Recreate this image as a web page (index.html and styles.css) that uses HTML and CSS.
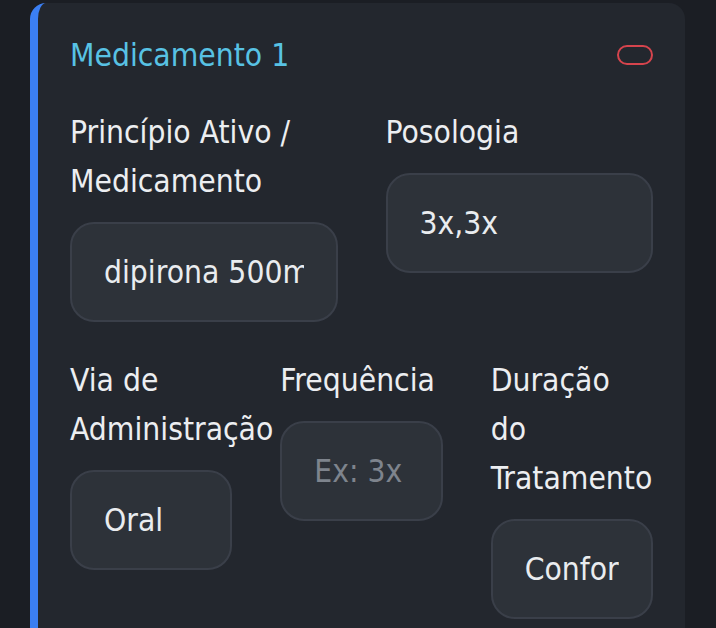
FILE: index.html
```html
<!DOCTYPE html>
<html lang="pt-BR">
<head>
<meta charset="utf-8">
<title>Medicamento</title>
<link rel="stylesheet" href="styles.css">
</head>
<body>
<div class="page">
  <section class="card">
    <header class="card-header">
      <h2 class="card-title">Medicamento 1</h2>
      <button class="remove-btn" type="button" aria-label="Remover medicamento"></button>
    </header>
    <div class="row row-two">
      <div class="field">
        <label class="field-label" for="f1">Princípio Ativo / Medicamento</label>
        <input class="field-input" id="f1" type="text" value="dipirona 500mg">
      </div>
      <div class="field">
        <label class="field-label" for="f2">Posologia</label>
        <input class="field-input" id="f2" type="text" value="3x,3x">
      </div>
    </div>
    <div class="row row-three">
      <div class="field">
        <label class="field-label" for="f3">Via de Administração</label>
        <input class="field-input" id="f3" type="text" value="Oral">
      </div>
      <div class="field">
        <label class="field-label" for="f4">Frequência</label>
        <input class="field-input" id="f4" type="text" placeholder="Ex: 3x">
      </div>
      <div class="field">
        <label class="field-label" for="f5">Duração do Tratamento</label>
        <input class="field-input" id="f5" type="text" value="Conforme orientação médica">
      </div>
    </div>
  </section>
</div>
</body>
</html>
```

FILE: styles.css
```css
html, body {
  margin: 0;
  padding: 0;
}

body {
  background: #1b1e24;
  font-family: "DejaVu Sans Condensed", "DejaVu Sans", sans-serif;
  font-stretch: condensed;
  color: #eceef1;
  height: 628px;
  overflow: hidden;
}

.page {
  padding: 3px 31px 0 30px;
}

.card {
  background: #23272e;
  border-left: 8px solid #3b7ff3;
  border-radius: 16px;
  padding: 32px 32px 40px 32px;
}

.card-header {
  display: flex;
  justify-content: space-between;
  align-items: center;
  margin-bottom: 33px;
}

.card-title {
  margin: 0;
  font-size: 31.5px;
  font-weight: 400;
  line-height: 40px;
  color: #58c2e4;
}

.remove-btn {
  width: 36px;
  height: 20px;
  padding: 0;
  border: 2px solid #d6444d;
  border-radius: 10px;
  background: transparent;
}

.row {
  display: grid;
  column-gap: 48px;
}

.row-two {
  grid-template-columns: minmax(0, 1fr) minmax(0, 1fr);
}

.row-three {
  grid-template-columns: minmax(0, 1fr) minmax(0, 1fr) minmax(0, 1fr);
  margin-top: 34px;
}

.field {
  min-width: 0;
}

.field-label {
  display: block;
  font-size: 31.5px;
  line-height: 49px;
  color: #eceef1;
  margin-bottom: 16px;
}

.field-input {
  display: block;
  width: 100%;
  box-sizing: border-box;
  height: 100px;
  margin: 0;
  padding: 0 32px;
  border: 2px solid #3a3f49;
  border-radius: 24px;
  background: #2d3239;
  color: #e9ecef;
  font-family: inherit;
  font-stretch: condensed;
  font-size: 31.5px;
  outline: none;
}

.field-input::placeholder {
  color: #7e848d;
  opacity: 1;
}
```
